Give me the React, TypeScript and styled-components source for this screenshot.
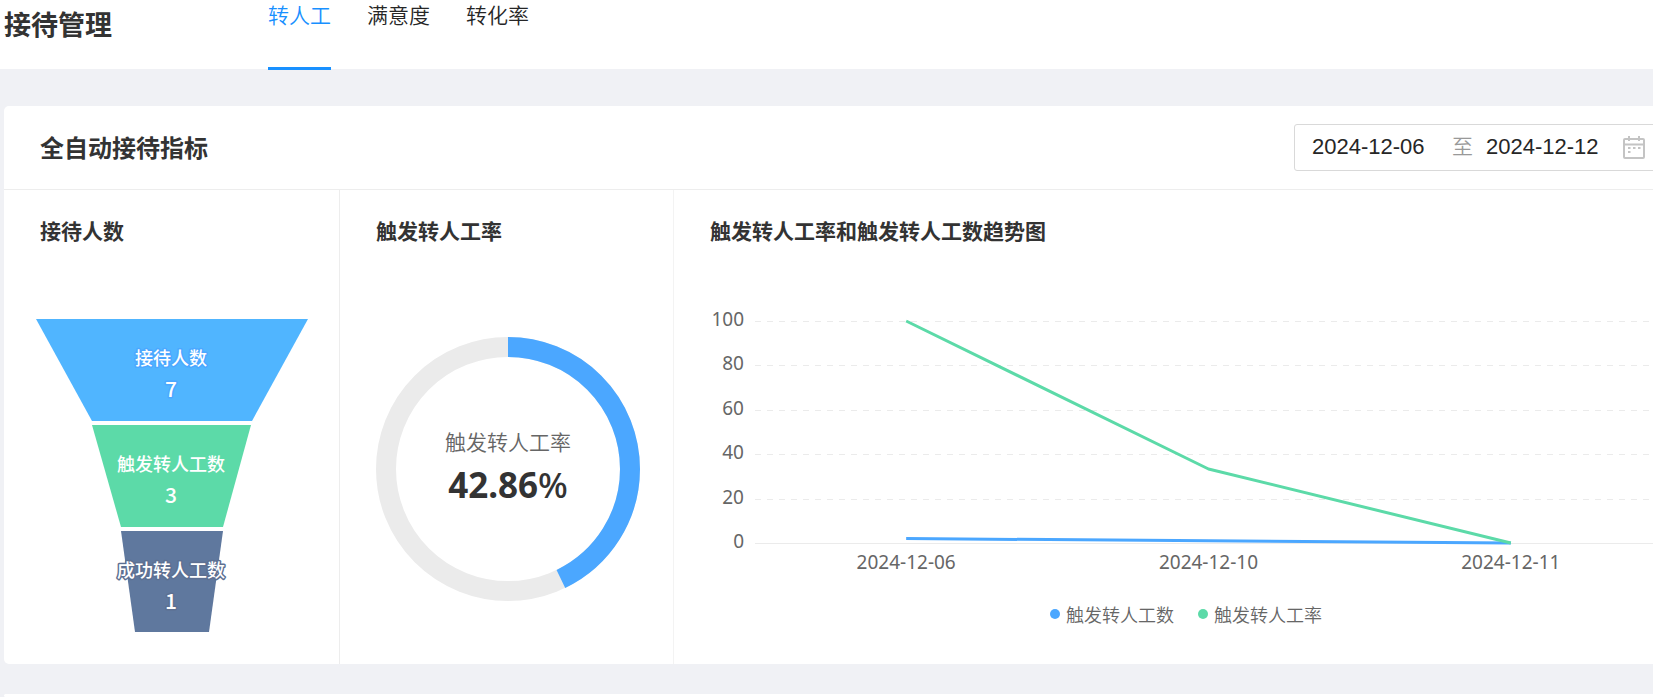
import React, { useState } from 'react';
import styled, { createGlobalStyle } from 'styled-components';

const BLUE = '#4ba7ff';
const GREEN = '#5cdaa8';

const GlobalStyle = createGlobalStyle`
  * { box-sizing: border-box; }
  body {
    margin: 0;
    background: #f0f1f5;
    color: #333;
    font-family: "Noto Sans CJK SC", sans-serif;
  }
  h1, h2, h3, p { margin: 0; }
`;

const Shell = styled.div`
  min-height: 100vh;
  overflow-x: clip;
`;

const Header = styled.header`
  display: flex;
  align-items: flex-start;
  height: 69px;
  padding-left: 4px;
  background: #fff;
`;

const PageTitle = styled.h1`
  width: 264px;
  padding-top: 8px;
  font-size: 27px;
  line-height: 32px;
`;

const Tabs = styled.nav`
  display: flex;
  gap: 36px;
  height: 70px;
`;

const Tab = styled.a<{ $active: boolean }>`
  border-bottom: 3px solid ${(p) => (p.$active ? '#1890ff' : 'transparent')};
  color: ${(p) => (p.$active ? '#1890ff' : '#262626')};
  font-size: 21px;
  font-weight: 350;
  line-height: 28px;
  text-decoration: none;
`;

const Content = styled.main`
  display: flex;
  flex-direction: column;
  gap: 30px;
  width: calc(100% + 46px);
  padding: 37px 0 0 4px;
`;

const Card = styled.section`
  min-height: 3px;
  border-radius: 5px;
  background: #fff;
`;

const CardHeader = styled.div`
  display: flex;
  align-items: center;
  justify-content: space-between;
  height: 84px;
  padding: 0 36px 1px;
  border-bottom: 1px solid #ededed;
`;

const CardTitle = styled.h2`
  font-size: 24px;
  line-height: 32px;
`;

const RangePicker = styled.div`
  display: flex;
  align-items: center;
  height: 47px;
  padding: 0 17px;
  border: 1px solid #d9d9d9;
  border-radius: 3px;
`;

const DateInput = styled.input<{ $width: number }>`
  width: ${(p) => p.$width}px;
  padding: 0;
  border: 0;
  outline: 0;
  background: transparent;
  color: #262626;
  font: 22px/32px "Liberation Sans", sans-serif;
`;

const RangeSeparator = styled.span`
  width: 34px;
  padding-bottom: 4px;
  color: #999;
  font-size: 21px;
  font-weight: 350;
  line-height: 28px;
`;

const IconButton = styled.button`
  display: flex;
  padding: 0;
  border: 0;
  background: none;
`;

const Panels = styled.div`
  display: grid;
  grid-template-columns: 336px 334px minmax(0, 1fr);
`;

const Panel = styled.section<{ $divider?: string }>`
  height: 474px;
  padding: 24px 36px 0;
  border-right: 1px solid ${(p) => p.$divider ?? 'transparent'};
`;

const PanelTitle = styled.h3`
  font-size: 21px;
  line-height: 32px;
`;

const FunnelChart = styled.svg`
  display: block;
  margin: 73px -4px 0;
`;

const FunnelText = styled.text<{ $size: number }>`
  fill: #fff;
  stroke-width: 3px;
  stroke-linejoin: round;
  paint-order: stroke;
  font-size: ${(p) => p.$size}px;
  font-weight: 500;
  text-anchor: middle;
`;

const Donut = styled.div`
  display: grid;
  width: 264px;
  margin-top: 91px;

  > * { grid-area: 1 / 1; }
`;

const DonutCenter = styled.div`
  align-self: center;
  text-align: center;
`;

const DonutLabel = styled.p`
  color: #666;
  font-size: 21px;
  font-weight: 350;
  line-height: 32px;
`;

const DonutValue = styled.p`
  font: 700 35px/56px "Noto Sans", sans-serif;
`;

const Percent = styled.span`
  font-weight: 500;
`;

const TrendChart = styled.div`
  display: grid;
  grid-template-columns: 34px minmax(0, 1fr);
  column-gap: 11px;
  margin-top: 75px;
  color: #666;
  font: 19px/24px "Noto Sans", sans-serif;
`;

const YAxis = styled.div`
  display: flex;
  flex-direction: column;
  justify-content: space-between;
  height: 246px;
  margin-top: -14px;
  text-align: right;
`;

const Plot = styled.svg`
  display: block;
  width: 100%;
  height: 224px;
  overflow: visible;
`;

const XAxis = styled.div`
  display: grid;
  grid-column: 2;
  grid-template-columns: repeat(3, 1fr);
  margin-top: -3px;
  text-align: center;
`;

const Legend = styled.div`
  display: flex;
  justify-content: center;
  gap: 24px;
  margin-top: 24px;
`;

const LegendItem = styled.span<{ $color: string }>`
  display: flex;
  align-items: center;
  gap: 6px;
  color: #666;
  font-size: 18px;
  font-weight: 350;
  line-height: 32px;

  &::before {
    content: '';
    width: 10px;
    height: 10px;
    border-radius: 50%;
    background: ${(p) => p.$color};
  }
`;

const tabs = ['转人工', '满意度', '转化率'];

const funnel = [
  { label: '接待人数', value: 7, color: '#50b5ff', outline: BLUE, points: '0,0 272,0 216,102 56,102' },
  { label: '触发转人工数', value: 3, color: GREEN, outline: GREEN, points: '56,106 215,106 187,208 85,208' },
  { label: '成功转人工数', value: 1, color: '#5f789e', outline: '#5d7092', points: '85,212 187,212 173,313 99,313' },
];

const ticks = [100, 80, 60, 40, 20, 0];
const days = ['2024-12-06', '2024-12-10', '2024-12-11'];
const series = [
  { name: '触发转人工数', color: BLUE, values: [2, 1, 0] },
  { name: '触发转人工率', color: GREEN, values: [100, 33.33, 0] },
];

function CalendarIcon() {
  return (
    <svg width="22" height="23" viewBox="0 0 22 23" fill="none" stroke="#c4c4c4" strokeWidth="2">
      <rect x="1" y="3" width="20" height="19" rx="1" />
      <path d="M1 8.5H21M6 0V5M16 0V5" />
      <path d="M5 12H7.500M10 12H12.500M15 12H17.500M5 16H7.500" />
    </svg>
  );
}

function Funnel() {
  return (
    <FunnelChart width="272" height="314" role="img" aria-label="接待人数">
      {funnel.map((step, i) => (
        <g key={step.label}>
          <polygon points={step.points} fill={step.color} />
          <FunnelText $size={18} stroke={step.outline} x="135" y={46 + i * 106}>{step.label}</FunnelText>
          <FunnelText $size={21} stroke={step.outline} x="135" y={78 + i * 106}>{step.value}</FunnelText>
        </g>
      ))}
    </FunnelChart>
  );
}

function RateDonut({ rate }: { rate: number }) {
  return (
    <Donut>
      <svg width="264" height="264" viewBox="0 0 264 264" fill="none" strokeWidth="20">
        <circle cx="132" cy="132" r="122" stroke="#ebebeb" />
        <circle
          cx="132"
          cy="132"
          r="122"
          stroke={BLUE}
          pathLength="100"
          strokeDasharray={`${rate} 100`}
          transform="rotate(-90 132 132)"
        />
      </svg>
      <DonutCenter>
        <DonutLabel>触发转人工率</DonutLabel>
        <DonutValue>{rate}<Percent>%</Percent></DonutValue>
      </DonutCenter>
    </Donut>
  );
}

function Trend() {
  return (
    <>
      <TrendChart>
        <YAxis>
          {ticks.map((t) => <span key={t}>{t}</span>)}
        </YAxis>
        <Plot>
          {ticks.map((t) => {
            const y = Math.round((100 - t) * 2.22) + 0.5;
            return (
              <line
                key={t}
                x1="0"
                x2="100%"
                y1={y}
                y2={y}
                stroke="#ebebeb"
                strokeDasharray={t === 0 ? undefined : '6 6'}
              />
            );
          })}
          <svg width="100%" height="222" viewBox="0 0 6 100" preserveAspectRatio="none" overflow="visible">
            {series.map((s) => (
              <polyline
                key={s.name}
                points={s.values.map((v, i) => `${i * 2 + 1},${100 - v}`).join(' ')}
                fill="none"
                stroke={s.color}
                strokeWidth="3"
                strokeLinejoin="bevel"
                vectorEffect="non-scaling-stroke"
              />
            ))}
          </svg>
        </Plot>
        <XAxis>
          {days.map((d) => <span key={d}>{d}</span>)}
        </XAxis>
      </TrendChart>
      <Legend>
        {series.map((s) => <LegendItem key={s.name} $color={s.color}>{s.name}</LegendItem>)}
      </Legend>
    </>
  );
}

export default function App() {
  const [active, setActive] = useState(0);
  const [from, setFrom] = useState('2024-12-06');
  const [to, setTo] = useState('2024-12-12');

  return (
    <Shell>
      <GlobalStyle />
      <Header>
        <PageTitle>接待管理</PageTitle>
        <Tabs>
          {tabs.map((tab, i) => (
            <Tab key={tab} href="#" $active={i === active} onClick={() => setActive(i)}>{tab}</Tab>
          ))}
        </Tabs>
      </Header>
      <Content>
        <Card>
          <CardHeader>
            <CardTitle>全自动接待指标</CardTitle>
            <RangePicker>
              <DateInput $width={140} aria-label="开始日期" value={from} onChange={(e) => setFrom(e.target.value)} />
              <RangeSeparator>至</RangeSeparator>
              <DateInput $width={137} aria-label="结束日期" value={to} onChange={(e) => setTo(e.target.value)} />
              <IconButton type="button" aria-label="选择日期"><CalendarIcon /></IconButton>
            </RangePicker>
          </CardHeader>
          <Panels>
            <Panel $divider="#ededed">
              <PanelTitle>接待人数</PanelTitle>
              <Funnel />
            </Panel>
            <Panel $divider="#f3f3f3">
              <PanelTitle>触发转人工率</PanelTitle>
              <RateDonut rate={42.86} />
            </Panel>
            <Panel>
              <PanelTitle>触发转人工率和触发转人工数趋势图</PanelTitle>
              <Trend />
            </Panel>
          </Panels>
        </Card>
        <Card />
      </Content>
    </Shell>
  );
}
